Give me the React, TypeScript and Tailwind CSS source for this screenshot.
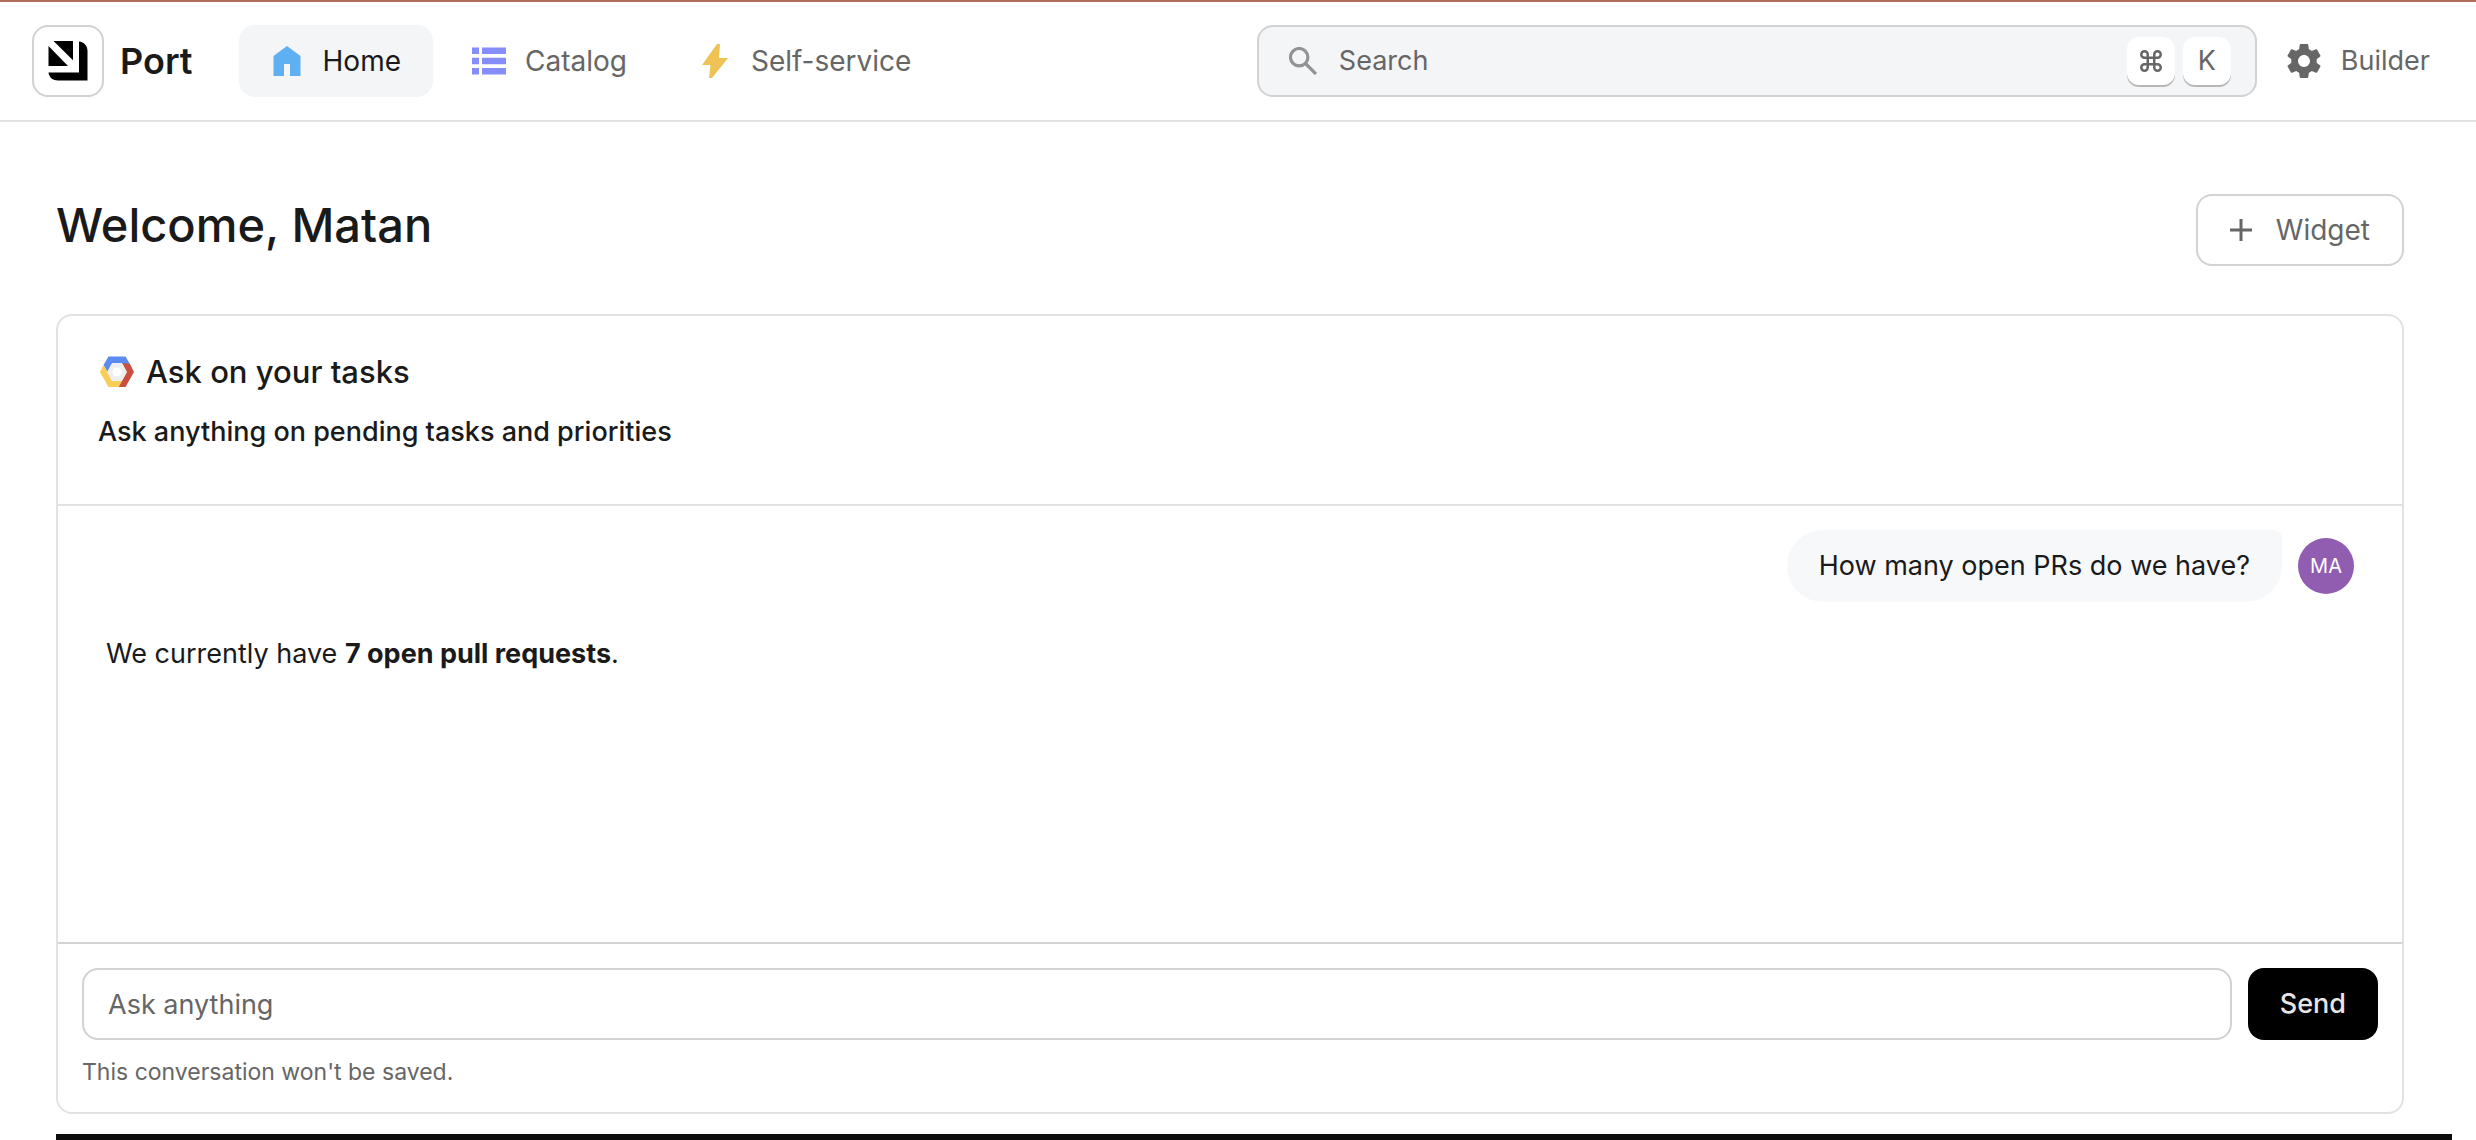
import type { ReactNode } from "react";
import { Command } from "lucide-react";

function PortLogo() {
  return (
    <svg viewBox="0 0 40 40" className="size-10" aria-hidden="true">
      <path d="M5.5 0H25V19.3Z" />
      <path d="M0.5 5V25H20Z" />
      <path d="M31 0.5C36 1 39.5 4.5 39.5 10V39.5H10C5 39.5 1 36.500 0.500 31.500H31Z" />
    </svg>
  );
}

function HomeIcon() {
  return (
    <svg viewBox="0 0 28 30" className="h-[30px] w-7 fill-[#5fb0f2]" aria-hidden="true">
      <path d="M14 0L27.500 10V30H17V18H11V30H0.500V10Z" />
    </svg>
  );
}

function CatalogIcon() {
  return (
    <svg viewBox="0 0 34 28" className="h-7 w-[34px] fill-[#858dfb]" aria-hidden="true">
      <path d="M0 0.500h7v6.500H0zM10 0.500h24v6.500H10zM0 10.750h7v6.500H0zM10 10.750h24v6.500H10zM0 21h7v6.500H0zM10 21h24v6.500H10z" />
    </svg>
  );
}

function BoltIcon() {
  return (
    <svg viewBox="0 0 26 34" className="h-[34px] w-[26px] fill-[#efc353]" aria-hidden="true">
      <path d="M15 0h3L17 14h9L10 34H7L8.500 21H0Z" />
    </svg>
  );
}

function SearchIcon() {
  return (
    <svg viewBox="0 0 28 28" className="size-7 fill-none stroke-[#929494]" aria-hidden="true">
      <circle cx="10.200" cy="10.200" r="8.700" strokeWidth="3.200" />
      <path d="M16.500 16.500L27 27" strokeWidth="3.200" />
    </svg>
  );
}

function GearIcon() {
  return (
    <svg viewBox="2 2 20 20" className="size-[34px] fill-[#666666]" aria-hidden="true">
      <path d="M19.43 12.98c.04-.32.07-.64.07-.98s-.03-.66-.07-.98l2.11-1.65c.19-.15.24-.42.12-.64l-2-3.46c-.12-.22-.39-.3-.61-.22l-2.49 1c-.52-.4-1.08-.73-1.69-.98l-.38-2.65C14.46 2.18 14.25 2 14 2h-4c-.25 0-.46.18-.49.42l-.38 2.65c-.61.25-1.17.59-1.69.98l-2.49-1c-.23-.09-.49 0-.61.22l-2 3.46c-.13.22-.07.49.12.64l2.11 1.65c-.04.32-.07.65-.07.98s.03.66.07.98l-2.11 1.65c-.19.15-.24.42-.12.64l2 3.46c.12.22.39.3.61.22l2.49-1c.52.4 1.08.73 1.69.98l.38 2.65c.03.24.24.42.49.42h4c.25 0 .46-.18.49-.42l.38-2.65c.61-.25 1.17-.59 1.69-.98l2.49 1c.23.09.49 0 .61-.22l2-3.46c.12-.22.07-.49-.12-.64l-2.11-1.65zM12 15.5c-1.93 0-3.500-1.570-3.500-3.500s1.570-3.500 3.500-3.500 3.500 1.570 3.500 3.500-1.570 3.500-3.500 3.500z" />
    </svg>
  );
}

function PlusIcon() {
  return (
    <svg viewBox="0 0 22 22" className="size-[22px] fill-[#666666]" aria-hidden="true">
      <path d="M9.500 0h3v9.500H22v3h-9.500V22h-3v-9.500H0v-3h9.500z" />
    </svg>
  );
}

function CloudHexIcon() {
  return (
    <svg viewBox="-2 0 38 32" className="h-8 w-[38px]" aria-hidden="true">
      <path d="M8.500 0.500H25.500L30 8H13L7.500 16L3.500 9Z" fill="#5b8bef" />
      <path d="M22 7L30 8L34 16L25.500 31H18.500L26.500 16Z" fill="#cb4f3f" />
      <path d="M3.500 9L7.500 16L12 25H22L18.500 31H8.500L0 16Z" fill="#f7ce56" />
      <path d="M12 7H22L27 16L22 25H12L7 16Z" fill="#eeeeee" />
      <circle cx="17" cy="16" r="4.500" fill="#ffffff" />
    </svg>
  );
}

function NavLink({ icon, label, active = false }: { icon: ReactNode; label: string; active?: boolean }) {
  return (
    <a
      href="#"
      aria-current={active ? "page" : undefined}
      className={
        active
          ? "flex h-[72px] items-center gap-[18px] rounded-2xl bg-[#f4f5f7] pr-8 pl-[30px] text-[28px] text-[#1a1a1a]"
          : "flex h-[72px] items-center gap-[18px] rounded-2xl pr-8 pl-[30px] text-[28px] text-[#666666]"
      }
    >
      <span className="flex w-9 justify-center">{icon}</span>
      {label}
    </a>
  );
}

export default function App() {
  return (
    <div className="bg-white font-['Inter',sans-serif] text-[27px] leading-10 text-[#1a1a1a]">
      <header className="flex items-center border-t-2 border-b-2 border-t-[#b06d5b] border-b-[#e2e2e2] py-[23px] pr-[46px] pl-8">
        <a href="#" className="flex items-center gap-4 text-[36px] font-semibold">
          <span className="flex size-[72px] items-center justify-center rounded-2xl border-2 border-[#d2d2d2]">
            <PortLogo />
          </span>
          Port
        </a>
        <nav className="ml-[46px] flex items-center gap-2">
          <NavLink active icon={<HomeIcon />} label="Home" />
          <NavLink icon={<CatalogIcon />} label="Catalog" />
          <NavLink icon={<BoltIcon />} label="Self-service" />
        </nav>
        <label className="ml-auto flex h-[72px] w-[1000px] items-center gap-[22px] rounded-2xl border-2 border-[#d2d2d2] bg-[#f4f5f7] pr-6 pl-[30px]">
          <SearchIcon />
          <input
            type="search"
            aria-label="Search"
            placeholder="Search"
            className="min-w-0 flex-1 bg-transparent outline-none placeholder:text-[#666666]"
          />
          <span className="flex gap-2 text-[#666666]">
            <kbd className="flex size-12 items-center justify-center rounded-xl bg-white shadow-[0_2px_0_#b8b8b8]">
              <Command size={26} strokeWidth={2.300} />
            </kbd>
            <kbd className="flex size-12 items-center justify-center rounded-xl bg-white font-['Inter',sans-serif] text-[27px] shadow-[0_2px_0_#b8b8b8]">
              K
            </kbd>
          </span>
        </label>
        <button type="button" className="ml-[30px] flex items-center gap-5 text-[#666666]">
          <GearIcon />
          Builder
        </button>
      </header>

      <main className="pt-[72px] pl-14">
        <div className="mr-[72px] flex items-start justify-between">
          <h1 className="text-[47px] leading-[62px] font-medium">Welcome, Matan</h1>
          <button
            type="button"
            className="flex h-[72px] items-center gap-6 rounded-2xl border-2 border-[#d2d2d2] px-8 text-[28px] text-[#666666]"
          >
            <PlusIcon />
            Widget
          </button>
        </div>

        <section className="mt-12 mr-[72px] rounded-2xl border-2 border-[#e2e2e2]">
          <div className="border-b-2 border-[#e2e2e2] px-10 pt-9 pb-[52px]">
            <h2 className="flex items-center gap-2.5 text-[31px] leading-10 font-medium">
              <CloudHexIcon />
              Ask on your tasks
            </h2>
            <p className="mt-5 font-medium">Ask anything on pending tasks and priorities</p>
          </div>

          <div className="h-[436px] px-12 pt-6">
            <div className="flex items-center justify-end gap-4">
              <p className="rounded-[36px] rounded-tr-lg bg-[#f7f8fa] px-8 py-4">How many open PRs do we have?</p>
              <span className="flex size-14 items-center justify-center rounded-full bg-[#915db1] text-[20px] text-white">
                MA
              </span>
            </div>
            <p className="mt-8">
              We currently have <strong className="font-bold">7 open pull requests</strong>.
            </p>
          </div>

          <form
            className="border-t-2 border-[#d2d2d2] px-6 pt-6 pb-5"
            onSubmit={(event) => event.preventDefault()}
          >
            <div className="flex gap-4">
              <input
                type="text"
                aria-label="Ask anything"
                placeholder="Ask anything"
                className="h-[72px] min-w-0 flex-1 rounded-2xl border-2 border-[#d2d2d2] px-6 outline-none placeholder:text-[#666666]"
              />
              <button type="submit" className="h-[72px] rounded-2xl bg-black px-8 font-medium text-[#e6e6e6]">
                Send
              </button>
            </div>
            <p className="mt-3 text-[23px] text-[#666666]">This conversation won't be saved.</p>
          </form>
        </section>

        <div className="mt-5 mr-6 h-1.5 bg-[#0d0d0d]" />
      </main>
    </div>
  );
}
